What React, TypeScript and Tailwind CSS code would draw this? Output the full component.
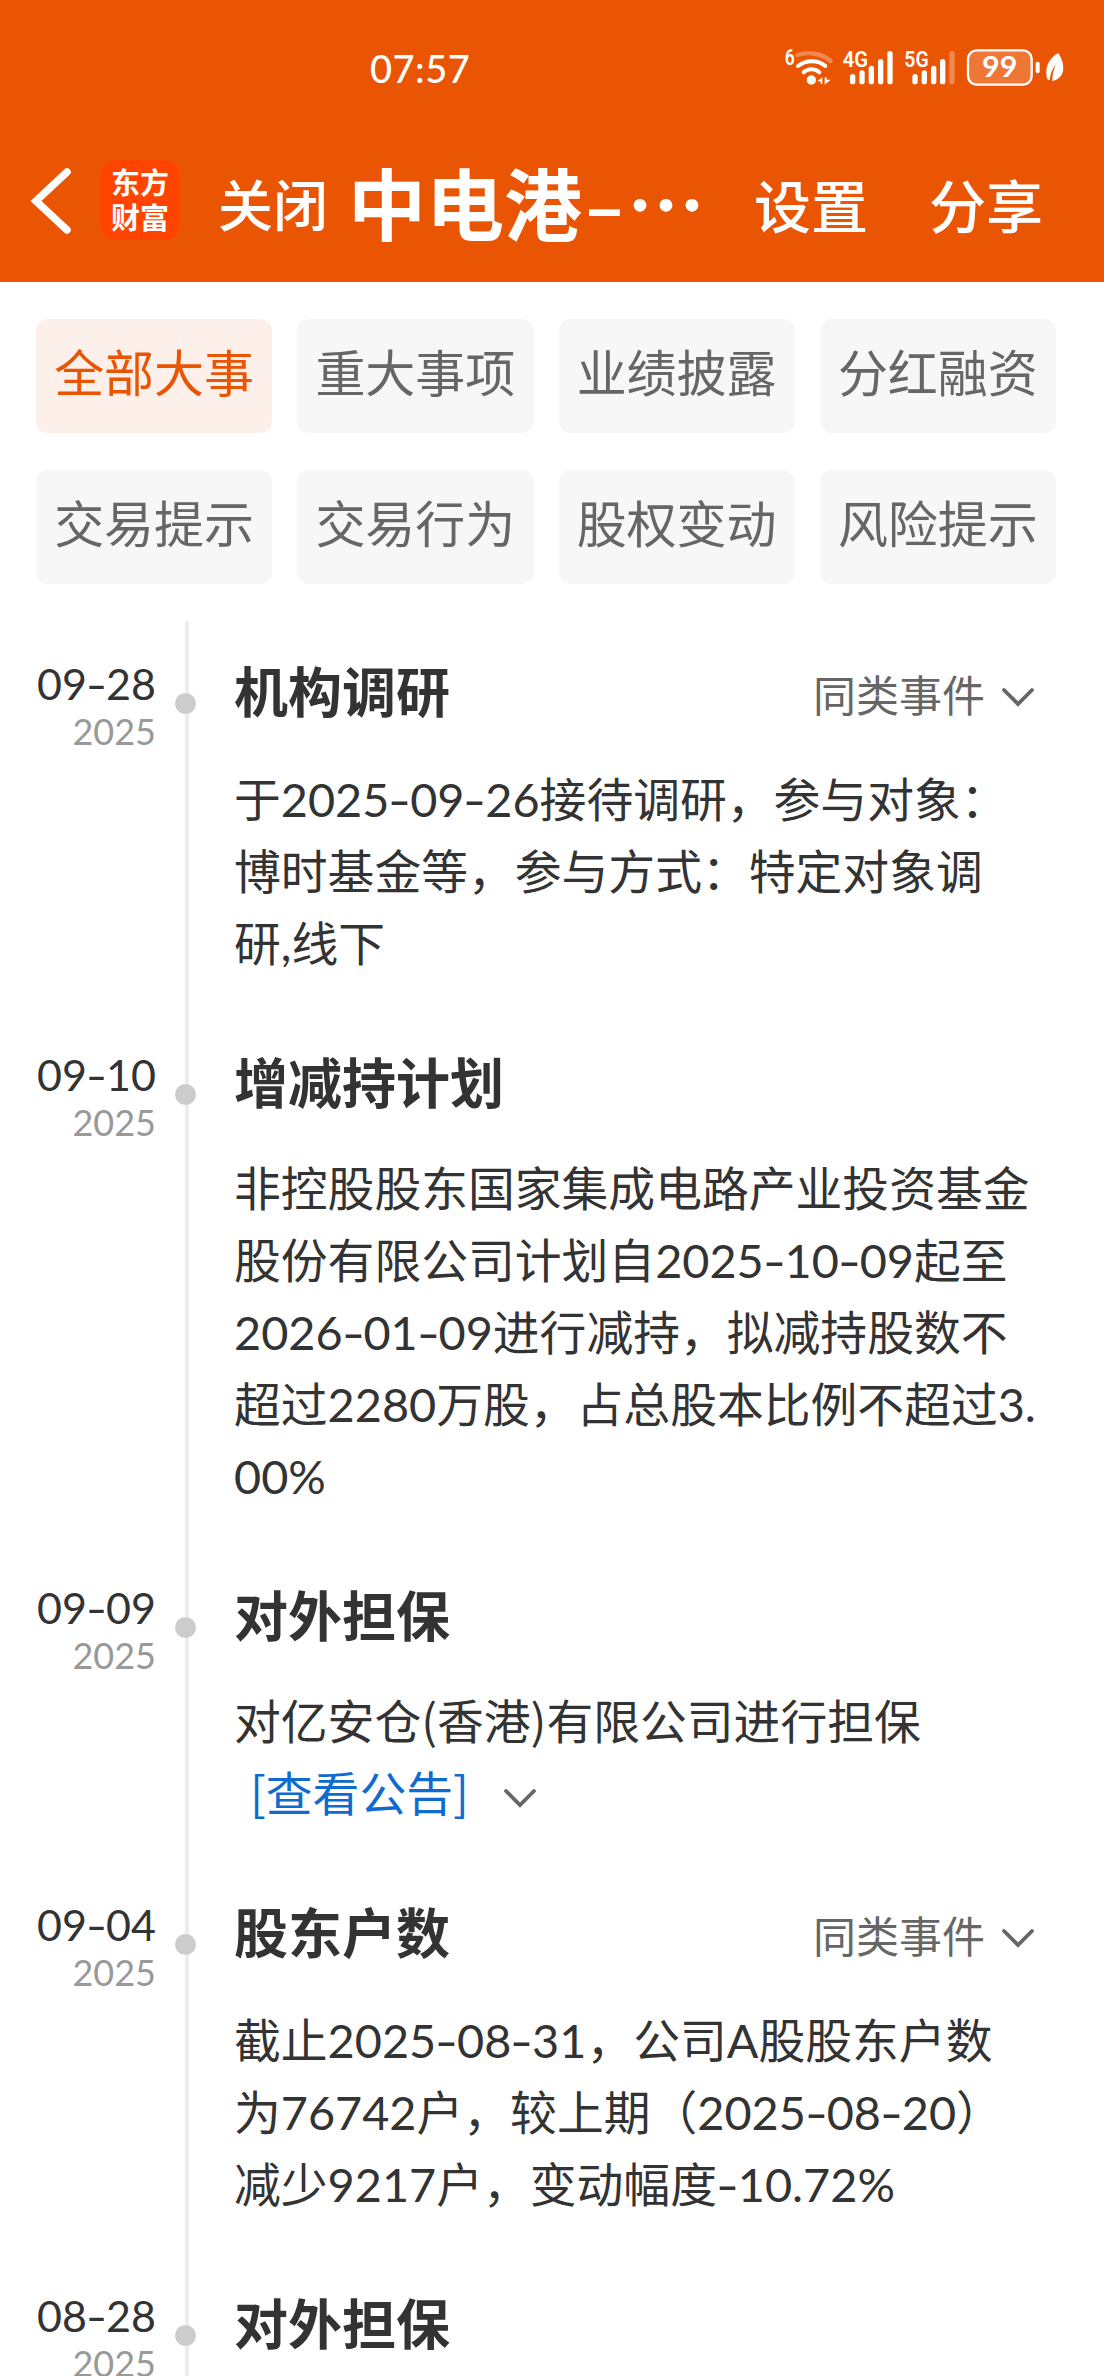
import { Fragment } from 'react'
import clsx from 'clsx'

const tabs = ['全部大事', '重大事项', '业绩披露', '分红融资', '交易提示', '交易行为', '股权变动', '风险提示']

type Event = {
  date: string
  title: string
  lines: string[]
  similar?: boolean
  link?: string
  height: string
}

const events: Event[] = [
  {
    date: '09-28',
    title: '机构调研',
    lines: ['于2025-09-26接待调研，参与对象：', '博时基金等，参与方式：特定对象调', '研,线下'],
    similar: true,
    height: 'h-[391px]',
  },
  {
    date: '09-10',
    title: '增减持计划',
    lines: [
      '非控股股东国家集成电路产业投资基金',
      '股份有限公司计划自2025-10-09起至',
      '2026-01-09进行减持，拟减持股数不',
      '超过2280万股，占总股本比例不超过3.',
      '00%',
    ],
    height: 'h-[533px]',
  },
  {
    date: '09-09',
    title: '对外担保',
    lines: ['对亿安仓(香港)有限公司进行担保'],
    link: '[查看公告]',
    height: 'h-[317px]',
  },
  {
    date: '09-04',
    title: '股东户数',
    lines: ['截止2025-08-31，公司A股股东户数', '为76742户，较上期（2025-08-20）', '减少9217户，变动幅度-10.72%'],
    similar: true,
    height: 'h-[391px]',
  },
  { date: '08-28', title: '对外担保', lines: [], height: 'h-[200px]' },
]

function Text({ children }: { children: string }) {
  return (
    <>
      {children.split(/([-()[\]])/).map((part, i) => {
        if (part === '-') {
          return (
            <span key={i} className="inline-block w-[0.445em] scale-x-[1.35] text-center">
              -
            </span>
          )
        }
        if (/^[()[\]]$/.test(part)) {
          return (
            <span key={i} className="font-['Noto_Sans_CJK_SC',sans-serif] leading-none">
              {part}
            </span>
          )
        }
        return <Fragment key={i}>{part}</Fragment>
      })}
    </>
  )
}

function Chevron({ className }: { className?: string }) {
  return (
    <svg className={className} width="34" height="22" viewBox="0 0 34 22" fill="none" stroke="#666" strokeWidth="3.8" strokeLinecap="round">
      <path d="M3 3l14 14L31 3" />
    </svg>
  )
}

function StatusIcons() {
  return (
    <svg
      className="absolute top-[30px] left-[770px]"
      width="310"
      height="70"
      viewBox="0 0 930 210"
      fill="none"
      stroke="#fff"
      strokeLinecap="round"
    >
      <g fill="#fff" stroke="none" fontFamily="Roboto, sans-serif" fontWeight="600">
        <text x="44" y="106" fontSize="64" textLength="30" lengthAdjust="spacingAndGlyphs">6</text>
        <text x="218" y="111" fontSize="64" textLength="76" lengthAdjust="spacingAndGlyphs">4G</text>
        <text x="403" y="111" fontSize="64" textLength="73" lengthAdjust="spacingAndGlyphs">5G</text>
      </g>
      <path d="M82 75C115 64 155 70 182 93" strokeWidth="13" strokeOpacity=".3" />
      <path d="M84 108C108 89 144 89 166 108M101 127C114 115 136 115 148 127" strokeWidth="12" />
      <circle cx="124" cy="150" r="14" fill="#fff" stroke="none" />
      <path d="M142 154L157 142V162H152V154ZM164 142V164L182 149H170V142Z" fill="#fff" stroke="none" />
      <path d="M248 140V155M276 129V155M304 115V155M332 95V155M360 71V155" strokeWidth="16" />
      <path d="M435 140V155M463 129V155M491 115V155M518 95V155" strokeWidth="16" />
      <path d="M546 71V155" strokeWidth="16" strokeOpacity=".3" />
      <rect x="594" y="61" width="191" height="103" rx="26" fill="#fff" fillOpacity=".2" strokeWidth="7" />
      <text
        x="636"
        y="142"
        fontSize="84"
        fontFamily="Lato, sans-serif"
        fontWeight="700"
        fill="#fff"
        stroke="none"
        textLength="106"
        lengthAdjust="spacingAndGlyphs"
      >
        99
      </text>
      <path d="M803 101V124" strokeWidth="12" />
      <path d="M865 69C836 84 822 115 832 148L839 151C841 130 847 116 857 104C851 120 846 134 847 153C883 147 890 108 865 69Z" fill="#fff" stroke="none" />
    </svg>
  )
}

function Header() {
  return (
    <header className="relative h-[282px] bg-[#ea5504] font-['Noto_Sans_CJK_SC',sans-serif] whitespace-nowrap text-white">
      <div className="flex h-[122px] pt-[44px] pl-[370px]">
        <span className="font-[Lato] text-[38px] leading-[48px] font-medium tracking-[0.5px]">07:57</span>
      </div>
      <StatusIcons />
      <div className="flex h-[160px] items-start pl-[30px]">
        <svg className="mt-[44px]" width="44" height="70" viewBox="0 0 44 70" fill="none" stroke="#fff" strokeWidth="7.5" strokeLinecap="round">
          <path d="M37 6L6 35L37 64" />
        </svg>
        <div className="mt-[38px] ml-[26px] flex h-[80px] w-[80px] flex-col items-center rounded-2xl bg-[#ff4400] pt-[4px] text-[29px] leading-[35px] font-bold">
          <span>东方</span>
          <span>财富</span>
        </div>
        <div className="mt-[53px] ml-[38px] w-[130px] text-[55px] leading-none font-medium">关闭</div>
        <div className="mt-[39px] flex w-[406px] text-[78px] leading-[80px] font-bold">
          <span>中电港</span>
          <span className="w-[45px] scale-x-150 text-center font-medium">-</span>
          <span>…</span>
        </div>
        <div className="mt-[53px] w-[175px] text-[57px] leading-none font-medium">设置</div>
        <div className="mt-[53px] text-[57px] leading-none font-medium">分享</div>
      </div>
    </header>
  )
}

function TimelineItem({ event }: { event: Event }) {
  return (
    <li className={clsx('flex', event.height)}>
      <div className="w-[156px] pt-[33px] text-right">
        <div className="text-[43px] leading-[60px] text-[#333]">
          <Text>{event.date}</Text>
        </div>
        <div className="text-[36px] leading-[35px] text-[#999]">2025</div>
      </div>
      <div className="ml-[29px] w-1 bg-[#ededed]">
        <div className="mt-[72px] -ml-[10px] h-[21px] w-[21px] rounded-full bg-[#ccc]" />
      </div>
      <div className="ml-[45px] flex-1 pt-[42px]">
        <div className="flex h-[60px] items-center justify-between pr-[69px]">
          <h2 className="text-[54px] leading-[60px] font-bold">{event.title}</h2>
          {event.similar && (
            <button className="flex items-center gap-[16px] pt-[5px] text-[43px] leading-[60px] text-[#666]">
              同类事件
              <Chevron className="mt-1" />
            </button>
          )}
        </div>
        <div className={clsx('text-[46.8px] leading-[72px] whitespace-nowrap', event.similar ? 'mt-[40px]' : 'mt-[38px]')}>
          {event.lines.map((line) => (
            <p key={line}>
              <Text>{line}</Text>
            </p>
          ))}
          {event.link && (
            <p className="flex items-center pl-[16px]">
              <a className="mr-[34px] text-[#0f6bcf]">
                <Text>{event.link}</Text>
              </a>
              <Chevron className="mt-[11px]" />
            </p>
          )}
        </div>
      </div>
    </li>
  )
}

export default function App() {
  return (
    <div className="h-[2376px] w-[1104px] overflow-hidden bg-white font-[Lato,'Noto_Sans_CJK_SC',sans-serif] text-[#333]" lang="zh-CN">
      <Header />
      <nav className="grid grid-cols-4 gap-x-[25px] gap-y-[37px] px-9 pt-[37px] pr-12">
        {tabs.map((tab, i) => (
          <button
            key={tab}
            className={clsx(
              'h-[114px] rounded-xl pb-[7px] text-[50px] leading-none whitespace-nowrap',
              i === 0 ? 'bg-[#fdf0ea] text-[#ea5504]' : 'bg-[#f7f7f8] text-[#666]',
            )}
          >
            {tab}
          </button>
        ))}
      </nav>
      <ul className="mt-[37px]">
        {events.map((event) => (
          <TimelineItem key={event.date} event={event} />
        ))}
      </ul>
    </div>
  )
}
